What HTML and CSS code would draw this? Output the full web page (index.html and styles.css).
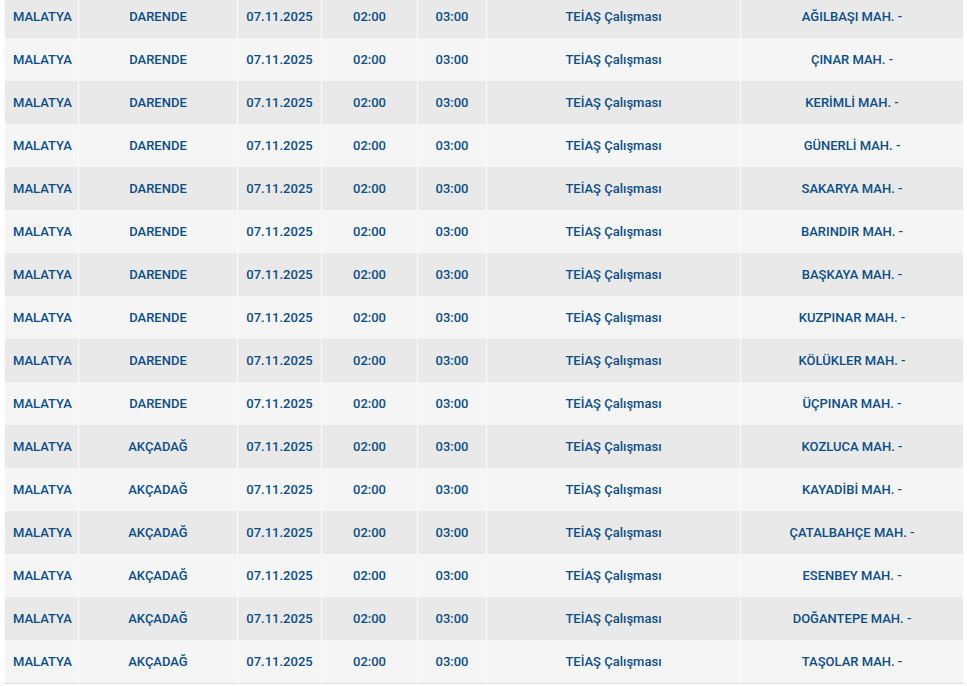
FILE: index.html
```html
<!DOCTYPE html>
<html lang="tr">
<head>
<meta charset="utf-8">
<link rel="stylesheet" href="styles.css">
</head>
<body>
<div class="wrap">
<table class="outages">
<colgroup>
<col class="c-il"><col class="c-ilce"><col class="c-tarih"><col class="c-bas"><col class="c-bit"><col class="c-neden"><col class="c-yer">
</colgroup>
<tbody>
<tr><td class="left">MALATYA</td><td>DARENDE</td><td>07.11.2025</td><td>02:00</td><td>03:00</td><td>TEİAŞ Çalışması</td><td>AĞILBAŞI MAH. -</td></tr>
<tr><td class="left">MALATYA</td><td>DARENDE</td><td>07.11.2025</td><td>02:00</td><td>03:00</td><td>TEİAŞ Çalışması</td><td>ÇINAR MAH. -</td></tr>
<tr><td class="left">MALATYA</td><td>DARENDE</td><td>07.11.2025</td><td>02:00</td><td>03:00</td><td>TEİAŞ Çalışması</td><td>KERİMLİ MAH. -</td></tr>
<tr><td class="left">MALATYA</td><td>DARENDE</td><td>07.11.2025</td><td>02:00</td><td>03:00</td><td>TEİAŞ Çalışması</td><td>GÜNERLİ MAH. -</td></tr>
<tr><td class="left">MALATYA</td><td>DARENDE</td><td>07.11.2025</td><td>02:00</td><td>03:00</td><td>TEİAŞ Çalışması</td><td>SAKARYA MAH. -</td></tr>
<tr><td class="left">MALATYA</td><td>DARENDE</td><td>07.11.2025</td><td>02:00</td><td>03:00</td><td>TEİAŞ Çalışması</td><td>BARINDIR MAH. -</td></tr>
<tr><td class="left">MALATYA</td><td>DARENDE</td><td>07.11.2025</td><td>02:00</td><td>03:00</td><td>TEİAŞ Çalışması</td><td>BAŞKAYA MAH. -</td></tr>
<tr><td class="left">MALATYA</td><td>DARENDE</td><td>07.11.2025</td><td>02:00</td><td>03:00</td><td>TEİAŞ Çalışması</td><td>KUZPINAR MAH. -</td></tr>
<tr><td class="left">MALATYA</td><td>DARENDE</td><td>07.11.2025</td><td>02:00</td><td>03:00</td><td>TEİAŞ Çalışması</td><td>KÖLÜKLER MAH. -</td></tr>
<tr><td class="left">MALATYA</td><td>DARENDE</td><td>07.11.2025</td><td>02:00</td><td>03:00</td><td>TEİAŞ Çalışması</td><td>ÜÇPINAR MAH. -</td></tr>
<tr><td class="left">MALATYA</td><td>AKÇADAĞ</td><td>07.11.2025</td><td>02:00</td><td>03:00</td><td>TEİAŞ Çalışması</td><td>KOZLUCA MAH. -</td></tr>
<tr><td class="left">MALATYA</td><td>AKÇADAĞ</td><td>07.11.2025</td><td>02:00</td><td>03:00</td><td>TEİAŞ Çalışması</td><td>KAYADİBİ MAH. -</td></tr>
<tr><td class="left">MALATYA</td><td>AKÇADAĞ</td><td>07.11.2025</td><td>02:00</td><td>03:00</td><td>TEİAŞ Çalışması</td><td>ÇATALBAHÇE MAH. -</td></tr>
<tr><td class="left">MALATYA</td><td>AKÇADAĞ</td><td>07.11.2025</td><td>02:00</td><td>03:00</td><td>TEİAŞ Çalışması</td><td>ESENBEY MAH. -</td></tr>
<tr><td class="left">MALATYA</td><td>AKÇADAĞ</td><td>07.11.2025</td><td>02:00</td><td>03:00</td><td>TEİAŞ Çalışması</td><td>DOĞANTEPE MAH. -</td></tr>
<tr><td class="left">MALATYA</td><td>AKÇADAĞ</td><td>07.11.2025</td><td>02:00</td><td>03:00</td><td>TEİAŞ Çalışması</td><td>TAŞOLAR MAH. -</td></tr>
</tbody>
</table>
</div>
</body>
</html>
```

FILE: styles.css
```css
html, body {
  margin: 0;
  padding: 0;
  background: #ffffff;
}

.wrap {
  padding: 0 4px 0 4px;
  margin-top: -5px;
}

.outages {
  width: 959px;
  table-layout: fixed;
  border-collapse: collapse;
  font-family: Roboto, "Noto Sans", Arial, sans-serif;
  font-size: 13px;
  font-weight: 500;
  color: #0b4e86;
  border-bottom: 1px solid #dcdcdc;
}

.c-il { width: 74px; }
.c-ilce { width: 159px; }
.c-tarih { width: 84px; }
.c-bas { width: 96px; }
.c-bit { width: 69px; }
.c-neden { width: 254px; }
.c-yer { width: 223px; }

.outages td {
  height: 43px;
  padding: 0 8px;
  box-sizing: border-box;
  text-align: center;
  vertical-align: middle;
  white-space: nowrap;
  border-left: 1px solid #fbfbfb;
  border-right: 1px solid #fbfbfb;
}

.outages td.left {
  text-align: left;
}

.outages tr:nth-child(odd) td {
  background: #e9e9e9;
}

.outages tr:nth-child(even) td {
  background: #f5f5f5;
}
```
